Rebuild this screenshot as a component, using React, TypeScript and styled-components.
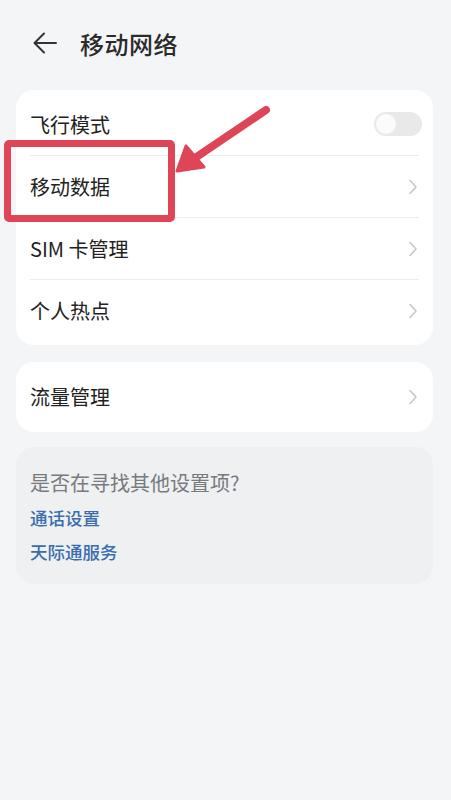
import React from "react";
import styled, { createGlobalStyle } from "styled-components";

const Global = createGlobalStyle`
  html, body { margin: 0; padding: 0; background: #f4f5f7; }
  body { font-family: "Noto Sans CJK SC", "Noto Sans", sans-serif; }
  * { box-sizing: border-box; }
`;

const Page = styled.div`
  position: relative;
  width: 451px;
  min-height: 800px;
  background: #f4f5f7;
  overflow: hidden;
`;

const Header = styled.div`
  display: flex;
  align-items: center;
  height: 88px;
  padding: 0 0 2px 32px;
  gap: 22px;
`;

const Title = styled.div`
  font-size: 24px;
  font-weight: 500;
  color: #2b2b2b;
  letter-spacing: 0.5px;
`;

const Content = styled.div`
  display: flex;
  flex-direction: column;
  padding: 2px 18px 0 16px;
`;

const Card = styled.div<{ $mt?: number; $grey?: boolean }>`
  margin-top: ${(p) => p.$mt ?? 0}px;
  background: ${(p) => (p.$grey ? "#eef0f2" : "#ffffff")};
  border-radius: 18px;
  padding: 3px 0 4px;
`;

const Row = styled.div<{ $h?: number }>`
  display: flex;
  align-items: center;
  justify-content: space-between;
  height: ${(p) => p.$h ?? 62}px;
  margin: 0 14px;
  border-top: 1px solid #ececec;
  &:first-child { border-top: none; }
`;

const Label = styled.span`
  font-size: 20px;
  color: #222;
`;

const Chevron = styled.svg`
  width: 10px;
  height: 16px;
  margin-right: 1px;
`;

const Toggle = styled.div`
  width: 48px;
  height: 24px;
  border-radius: 12px;
  background: #e9e9ea;
  padding: 2px;
  display: flex;
  align-items: center;
  margin-right: -3px;
`;

const Knob = styled.div`
  width: 20px;
  height: 20px;
  border-radius: 50%;
  background: #fbfbfb;
`;

const Help = styled.div`
  display: flex;
  flex-direction: column;
  padding: 15px 14px 11px;
`;

const HelpTitle = styled.div`
  font-size: 20px;
  color: #777a7e;
  line-height: 36px;
`;

const Link = styled.div`
  font-size: 17.5px;
  font-weight: 500;
  color: #3a6cae;
  line-height: 34px;
`;

const RedBox = styled.div`
  position: absolute;
  left: 4px;
  top: 140px;
  width: 171px;
  height: 82px;
  border: 7px solid #de4658;
  border-radius: 5px;
`;

const ArrowSvg = styled.svg`
  position: absolute;
  left: 170px;
  top: 100px;
  width: 110px;
  height: 80px;
`;

const ChevronIcon = () => (
  <Chevron viewBox="0 0 10 16">
    <path d="M2 1.5 L8 8 L2 14.5" fill="none" stroke="#c6c6c6" strokeWidth="1.6" strokeLinecap="round" strokeLinejoin="round" />
  </Chevron>
);

export default function App() {
  return (
    <Page>
      <Global />
      <Header>
        <svg width="26" height="24" viewBox="0 0 26 24">
          <path d="M24 12 H3 M12 2.5 L2.5 12 L12 21.5" fill="none" stroke="#333" strokeWidth="2" strokeLinecap="round" strokeLinejoin="round" />
        </svg>
        <Title>移动网络</Title>
      </Header>
      <Content>
        <Card>
          <Row>
            <Label>飞行模式</Label>
            <Toggle><Knob /></Toggle>
          </Row>
          <Row>
            <Label>移动数据</Label>
            <ChevronIcon />
          </Row>
          <Row>
            <Label>SIM 卡管理</Label>
            <ChevronIcon />
          </Row>
          <Row>
            <Label>个人热点</Label>
            <ChevronIcon />
          </Row>
        </Card>
        <Card $mt={17}>
          <Row $h={63}>
            <Label>流量管理</Label>
            <ChevronIcon />
          </Row>
        </Card>
        <Card $mt={15} $grey>
          <Help>
            <HelpTitle>是否在寻找其他设置项?</HelpTitle>
            <Link>通话设置</Link>
            <Link>天际通服务</Link>
          </Help>
        </Card>
      </Content>
      <RedBox />
      <ArrowSvg viewBox="170 100 110 80">
        <line x1="266" y1="110" x2="192" y2="160" stroke="#de4658" strokeWidth="8" strokeLinecap="round" />
        <polygon points="177,171 186,146 204,167" fill="#de4658" stroke="#de4658" strokeWidth="3" strokeLinejoin="round" />
      </ArrowSvg>
    </Page>
  );
}
